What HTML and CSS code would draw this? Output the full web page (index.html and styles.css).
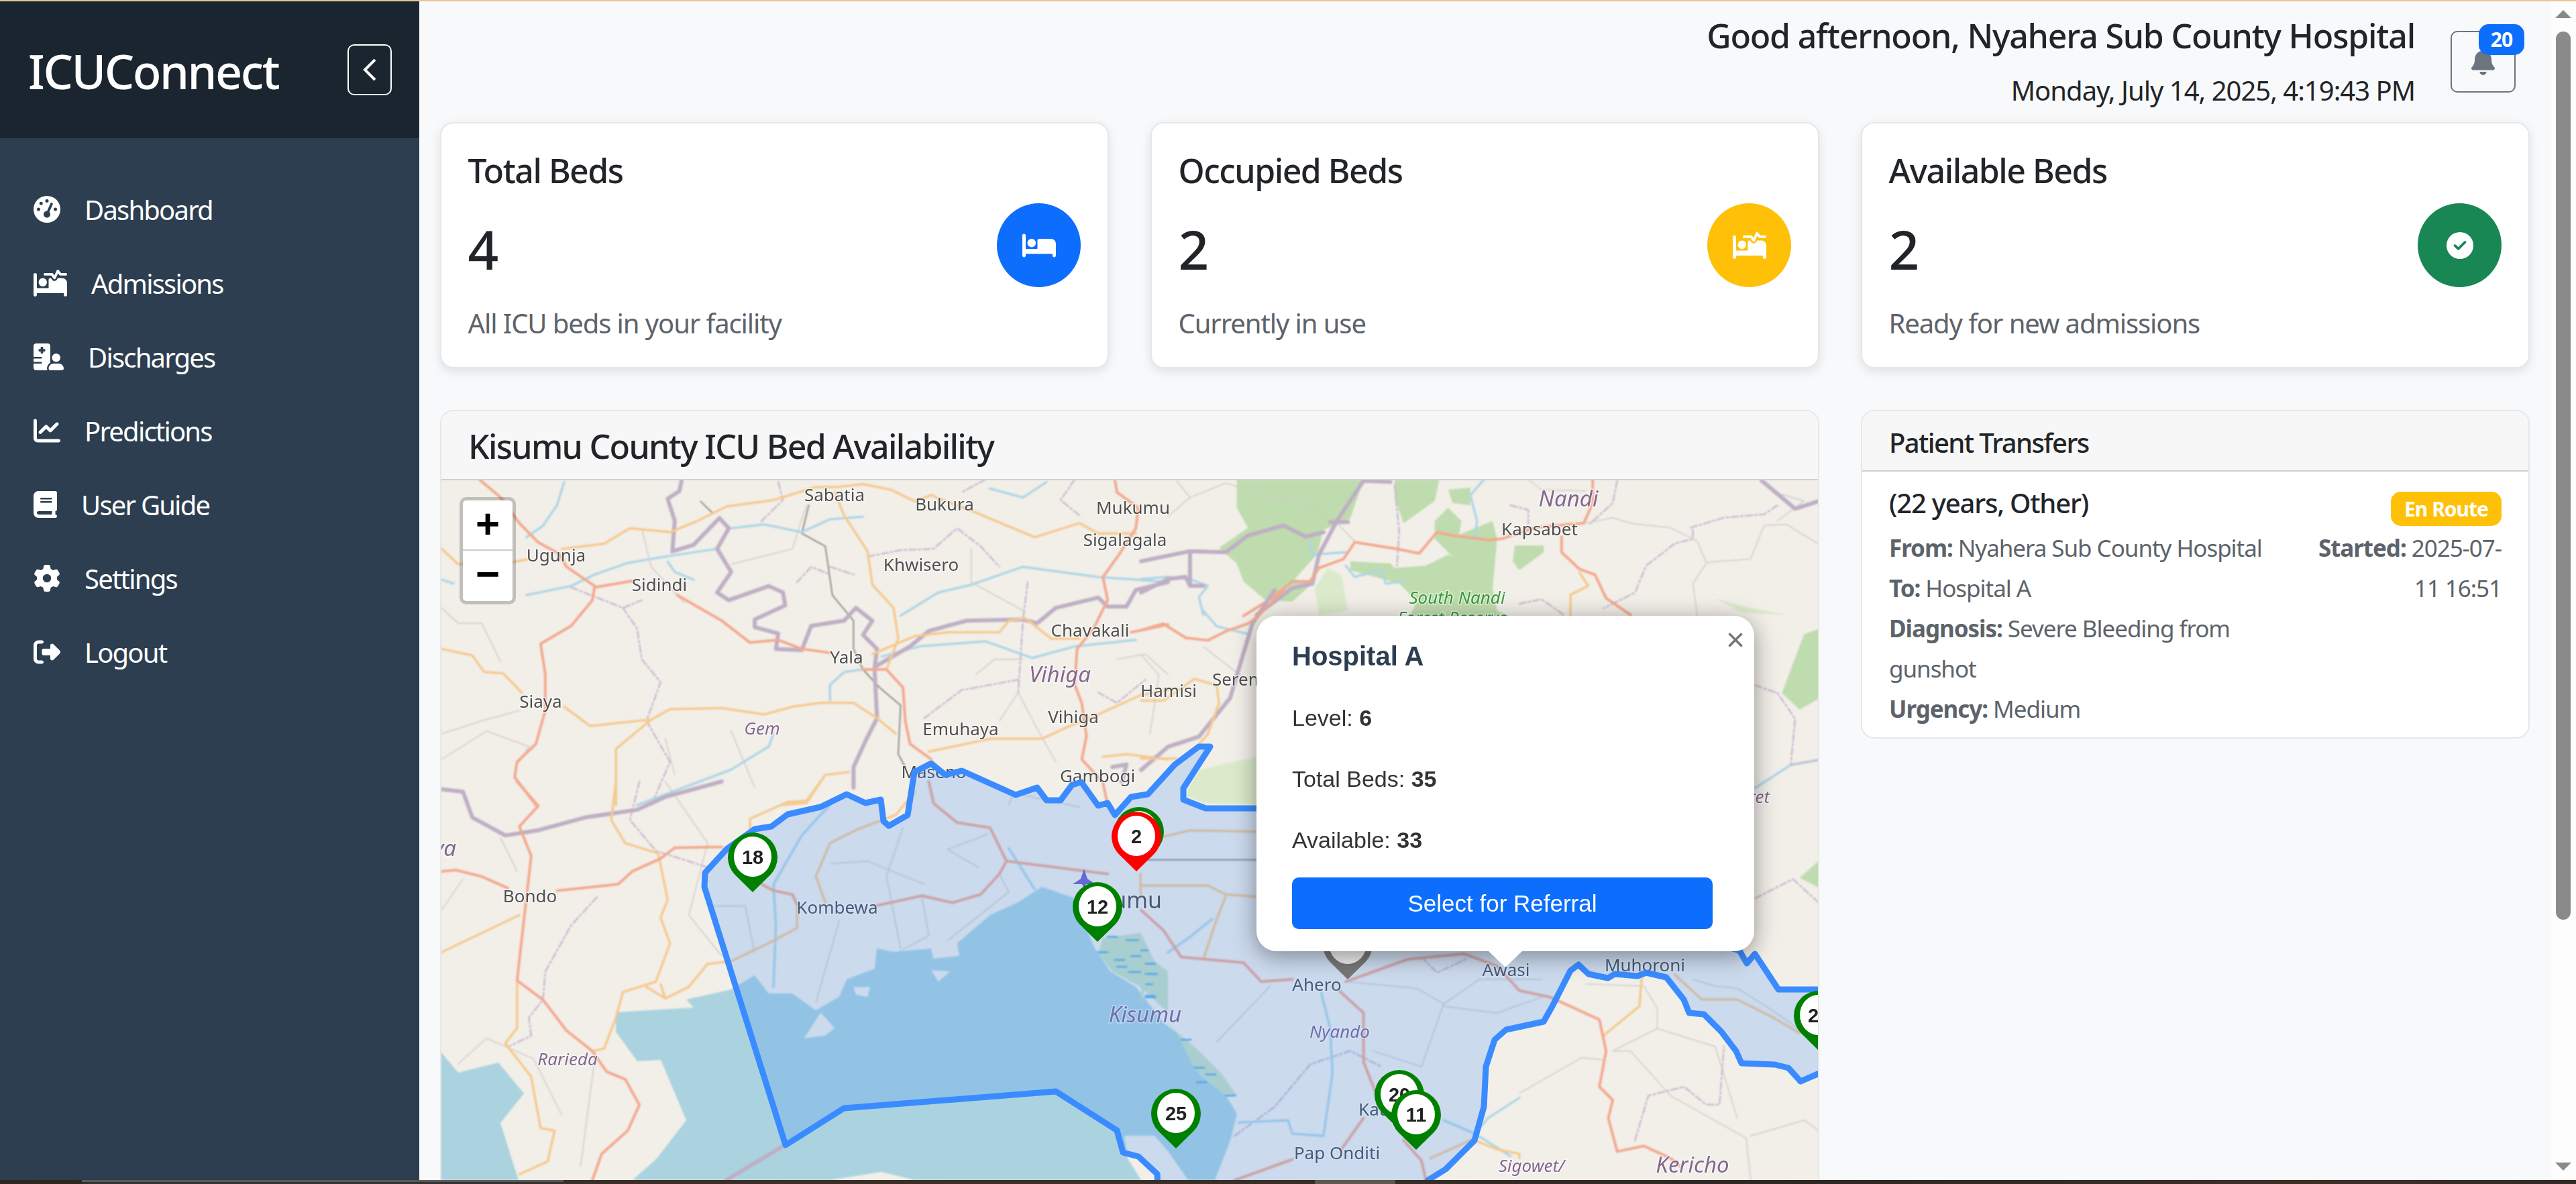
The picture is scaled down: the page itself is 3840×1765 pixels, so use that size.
FILE: index.html
```html
<!DOCTYPE html>
<html lang="en">
<head>
    <meta charset="UTF-8">
    <meta name="viewport" content="width=device-width, initial-scale=1.0">
    <title>ICUConnect</title>
    <link rel="stylesheet" href="styles.css">
</head>
<body>
    <div class="top-line"></div>
    <div class="window">
        <aside class="sidebar">
            <div class="sidebar-header">
                <h3 class="brand">ICUConnect</h3>
                <button class="collapse-btn" aria-label="Collapse">
                    <svg viewBox="0 0 20 34" class="chevron"><path d="M18 2 3 17l15 15"/></svg>
                </button>
            </div>
            <nav class="menu">
                <a class="menu-item">
                    <svg viewBox="0 0 512 512" class="ico"><path d="M0 256a256 256 0 1 1 512 0A256 256 0 1 1 0 256zM288 96a32 32 0 1 0 -64 0 32 32 0 1 0 64 0zM256 416c35.3 0 64-28.7 64-64c0-17.4-6.9-33.1-18.1-44.6L366 161.7c5.3-12.1-.2-26.3-12.3-31.6s-26.3 .2-31.6 12.3L257.9 288c-.6 0-1.3 0-1.9 0c-35.3 0-64 28.7-64 64s28.7 64 64 64zM176 144a32 32 0 1 0 -64 0 32 32 0 1 0 64 0zM96 288a32 32 0 1 0 0-64 32 32 0 1 0 0 64zm352-32a32 32 0 1 0 -64 0 32 32 0 1 0 64 0z"/></svg>
                    Dashboard
                </a>
                <a class="menu-item">
                    <svg viewBox="0 0 640 512" class="ico"><path d="M483.2 9.6L524 64h92c13.3 0 24 10.7 24 24s-10.7 24-24 24H512c-7.6 0-14.7-3.6-19.2-9.6L468.7 70.3l-47 99.9c-3.7 7.8-11.3 13.1-19.9 13.7s-16.9-3.4-21.7-10.6L339.2 112H216c-13.3 0-24-10.7-24-24s10.7-24 24-24H352c8 0 15.5 4 20 10.7l24.4 36.6 45.9-97.5C445.9 6.2 453.2 1 461.6 .1s16.6 2.7 21.6 9.5zM320 160h12.7l20.7 31.1c11.2 16.8 30.6 26.3 50.7 24.8s37.9-13.7 46.5-32L461.9 160H544c53 0 96 43 96 96V480c0 17.7-14.3 32-32 32s-32-14.3-32-32V448H352 320 64v32c0 17.7-14.3 32-32 32s-32-14.3-32-32V96C0 78.3 14.3 64 32 64s32 14.3 32 32V352H288V192c0-17.7 14.3-32 32-32zm-144 0a80 80 0 1 1 0 160 80 80 0 1 1 0-160z"/></svg>
                    Admissions
                </a>
                <a class="menu-item">
                    <svg viewBox="0 0 576 512" class="ico"><path d="M48 0C21.5 0 0 21.5 0 48V256H144c8.8 0 16 7.2 16 16s-7.2 16-16 16H0v64H144c8.8 0 16 7.2 16 16s-7.2 16-16 16H0v80c0 26.5 21.5 48 48 48H265.9c-6.3-10.2-9.9-22.2-9.9-35.1c0-46.9 25.8-87.8 64-109.2V271.8 48c0-26.5-21.5-48-48-48H48zM152 64h16c8.8 0 16 7.2 16 16v24h24c8.8 0 16 7.2 16 16v16c0 8.8-7.2 16-16 16H184v24c0 8.8-7.2 16-16 16H152c-8.8 0-16-7.2-16-16V152H112c-8.8 0-16-7.2-16-16V120c0-8.8 7.2-16 16-16h24V80c0-8.8 7.2-16 16-16zM512 272a80 80 0 1 0 -160 0 80 80 0 1 0 160 0zM288 477.1c0 19.3 15.6 34.9 34.9 34.9H541.1c19.3 0 34.9-15.6 34.9-34.9c0-51.4-41.7-93.1-93.1-93.1H381.1c-51.4 0-93.1 41.7-93.1 93.1z"/></svg>
                    Discharges
                </a>
                <a class="menu-item">
                    <svg viewBox="0 0 512 512" class="ico"><path d="M64 64c0-17.7-14.3-32-32-32S0 46.3 0 64V400c0 44.2 35.8 80 80 80H480c17.7 0 32-14.3 32-32s-14.3-32-32-32H80c-8.8 0-16-7.2-16-16V64zm406.6 86.6c12.5-12.5 12.5-32.8 0-45.3s-32.8-12.5-45.3 0L320 210.7l-57.4-57.4c-12.5-12.5-32.8-12.5-45.3 0l-112 112c-12.5 12.5-12.5 32.8 0 45.3s32.8 12.5 45.3 0L240 221.3l57.4 57.4c12.5 12.5 32.8 12.5 45.3 0l128-128z"/></svg>
                    Predictions
                </a>
                <a class="menu-item">
                    <svg viewBox="0 0 448 512" class="ico"><path d="M96 0C43 0 0 43 0 96V416c0 53 43 96 96 96H384h32c17.7 0 32-14.3 32-32s-14.3-32-32-32V384c17.7 0 32-14.3 32-32V32c0-17.7-14.3-32-32-32H384 96zm0 384H352v64H96c-17.7 0-32-14.3-32-32s14.3-32 32-32zm32-240c0-8.8 7.2-16 16-16H336c8.8 0 16 7.2 16 16s-7.2 16-16 16H144c-8.8 0-16-7.2-16-16zm16 48H336c8.8 0 16 7.2 16 16s-7.2 16-16 16H144c-8.8 0-16-7.2-16-16s7.2-16 16-16z"/></svg>
                    User Guide
                </a>
                <a class="menu-item">
                    <svg viewBox="0 0 512 512" class="ico"><path d="M495.9 166.6c3.2 8.7 .5 18.4-6.4 24.6l-43.3 39.4c1.1 8.3 1.7 16.8 1.7 25.4s-.6 17.1-1.7 25.4l43.3 39.4c6.9 6.2 9.6 15.9 6.4 24.6c-4.4 11.9-9.7 23.3-15.8 34.3l-4.7 8.1c-6.6 11-14 21.4-22.1 31.2c-5.9 7.2-15.7 9.6-24.5 6.8l-55.7-17.7c-13.4 10.3-28.2 18.9-44 25.4l-12.5 57.1c-2 9.1-9 16.3-18.2 17.8c-13.8 2.3-28 3.5-42.5 3.5s-28.7-1.2-42.5-3.5c-9.2-1.5-16.2-8.7-18.2-17.8l-12.5-57.1c-15.8-6.5-30.6-15.1-44-25.4L83.1 425.9c-8.8 2.8-18.6 .3-24.5-6.8c-8.1-9.8-15.5-20.2-22.1-31.2l-4.7-8.1c-6.1-11-11.4-22.4-15.8-34.3c-3.2-8.7-.5-18.4 6.4-24.6l43.3-39.4C64.6 273.1 64 264.6 64 256s.6-17.1 1.7-25.4L22.4 191.2c-6.9-6.2-9.6-15.9-6.4-24.6c4.4-11.9 9.7-23.3 15.8-34.3l4.7-8.1c6.6-11 14-21.4 22.1-31.2c5.9-7.2 15.7-9.6 24.5-6.8l55.7 17.7c13.4-10.3 28.2-18.9 44-25.4l12.5-57.1c2-9.1 9-16.3 18.2-17.8C227.3 1.2 241.5 0 256 0s28.7 1.2 42.5 3.5c9.2 1.5 16.2 8.7 18.2 17.8l12.5 57.1c15.8 6.5 30.6 15.1 44 25.4l55.7-17.7c8.8-2.8 18.6-.3 24.5 6.8c8.1 9.8 15.5 20.2 22.1 31.2l4.7 8.1c6.1 11 11.4 22.4 15.8 34.3zM256 336a80 80 0 1 0 0-160 80 80 0 1 0 0 160z"/></svg>
                    Settings
                </a>
                <a class="menu-item">
                    <svg viewBox="0 0 512 512" class="ico"><path d="M377.9 105.9L500.7 228.7c7.2 7.2 11.3 17.1 11.3 27.3s-4.1 20.1-11.3 27.3L377.9 406.1c-6.4 6.4-15 9.9-24 9.9c-18.7 0-33.9-15.2-33.9-33.9l0-62.1-128 0c-17.7 0-32-14.3-32-32l0-64c0-17.7 14.3-32 32-32l128 0 0-62.1c0-18.7 15.2-33.9 33.9-33.9c9 0 17.6 3.5 24 9.9zM160 96L96 96c-17.7 0-32 14.3-32 32l0 256c0 17.7 14.3 32 32 32l64 0c17.7 0 32 14.3 32 32s-14.3 32-32 32l-64 0c-53 0-96-43-96-96L0 128C0 75 43 32 96 32l64 0c17.7 0 32 14.3 32 32s-14.3 32-32 32z"/></svg>
                    Logout
                </a>
            </nav>
        </aside>

        <main class="content">
            <header class="topbar">
                <div class="greeting">
                    <h4 class="hello">Good afternoon, Nyahera Sub County Hospital</h4>
                    <p class="clock">Monday, July 14, 2025, 4:19:43 PM</p>
                </div>
                <button class="bell-btn" aria-label="Notifications">
                    <svg viewBox="0 0 448 512" class="bell"><path d="M224 0c-17.7 0-32 14.3-32 32V51.2C119 66 64 130.6 64 208v18.8c0 47-17.3 92.4-48.5 127.6l-7.4 8.3c-8.4 9.4-10.4 22.9-5.3 34.4S19.4 416 32 416H416c12.6 0 24-7.4 29.2-18.9s3.1-25-5.3-34.4l-7.4-8.3C401.3 319.2 384 273.9 384 226.8V208c0-77.4-55-142-128-156.8V32c0-17.7-14.3-32-32-32zm45.3 493.3c12-12 18.7-28.3 18.7-45.3H224 160c0 17 6.7 33.3 18.7 45.3s28.3 18.7 45.3 18.7s33.3-6.7 45.3-18.7z"/></svg>
                    <span class="bell-badge">20</span>
                </button>
            </header>

            <section class="grid">
                <div class="card stat">
                    <h5 class="stat-title">Total Beds</h5>
                    <div class="stat-row">
                        <span class="stat-num">4</span>
                        <span class="stat-icon blue">
                            <svg viewBox="0 0 640 512" class="stat-ico"><path d="M32 32c17.7 0 32 14.3 32 32V320H288V160c0-17.7 14.3-32 32-32H544c53 0 96 43 96 96V448c0 17.7-14.3 32-32 32s-32-14.3-32-32V416H352 320 64v32c0 17.7-14.3 32-32 32s-32-14.3-32-32V64C0 46.3 14.3 32 32 32zm144 96a80 80 0 1 1 0 160 80 80 0 1 1 0-160z"/></svg>
                        </span>
                    </div>
                    <p class="stat-note">All ICU beds in your facility</p>
                </div>
                <div class="card stat">
                    <h5 class="stat-title">Occupied Beds</h5>
                    <div class="stat-row">
                        <span class="stat-num">2</span>
                        <span class="stat-icon yellow">
                            <svg viewBox="0 0 640 512" class="stat-ico"><path d="M483.2 9.6L524 64h92c13.3 0 24 10.7 24 24s-10.7 24-24 24H512c-7.6 0-14.7-3.6-19.2-9.6L468.7 70.3l-47 99.9c-3.7 7.8-11.3 13.1-19.9 13.7s-16.9-3.4-21.7-10.6L339.2 112H216c-13.3 0-24-10.7-24-24s10.7-24 24-24H352c8 0 15.5 4 20 10.7l24.4 36.6 45.9-97.5C445.9 6.2 453.2 1 461.6 .1s16.6 2.7 21.6 9.5zM320 160h12.7l20.7 31.1c11.2 16.8 30.6 26.3 50.7 24.8s37.9-13.7 46.5-32L461.9 160H544c53 0 96 43 96 96V480c0 17.7-14.3 32-32 32s-32-14.3-32-32V448H352 320 64v32c0 17.7-14.3 32-32 32s-32-14.3-32-32V96C0 78.3 14.3 64 32 64s32 14.3 32 32V352H288V192c0-17.7 14.3-32 32-32zm-144 0a80 80 0 1 1 0 160 80 80 0 1 1 0-160z"/></svg>
                        </span>
                    </div>
                    <p class="stat-note">Currently in use</p>
                </div>
                <div class="card stat">
                    <h5 class="stat-title">Available Beds</h5>
                    <div class="stat-row">
                        <span class="stat-num">2</span>
                        <span class="stat-icon green">
                            <svg viewBox="0 0 512 512" class="stat-ico"><path d="M256 512A256 256 0 1 0 256 0a256 256 0 1 0 0 512zM369 209L241 337c-9.4 9.4-24.6 9.4-33.9 0l-64-64c-9.4-9.4-9.4-24.6 0-33.9s24.6-9.4 33.9 0l47 47L335 175c9.4-9.4 24.6-9.4 33.9 0s9.4 24.6 0 33.9z"/></svg>
                        </span>
                    </div>
                    <p class="stat-note">Ready for new admissions</p>
                </div>

                <div class="card map-card">
                    <div class="card-head map-head">Kisumu County ICU Bed Availability</div>
                    <div class="map">
                        <svg class="map-svg" viewBox="656 716 2056 1043">
                            <defs>
                                <path id="pin-shape" d="M0 52-26.2 26.2A37 37 0 1 1 26.2 26.2Z"/>
                            </defs>
                            <rect x="656" y="716" width="2056" height="1043" fill="#f2efe9"/>
                            <g class="tiles">
                                <!-- forest and wetland, traced from the tile picture -->
                                <g transform="translate(1700 710) scale(.6633 .3333)">
                                    <path class="forest" d="M215 15H500L470 190 410 240 395 350 345 460 385 480 340 560 280 555 230 470 215 390 175 320 240 230 215 140Z"/>
                                    <path class="forest" d="M570 15H670L660 110 590 210 570 100Z"/>
                                    <path class="forest" d="M690 60 740 50V130L700 120Z"/>
                                    <path class="forest" d="M660 200 690 140 720 200 715 260 790 200 800 280 790 500 800 600 840 640H600L620 560 580 480 470 420V380L560 390 570 410 640 400 690 350 700 360 660 280Z"/>
                                    <path class="forest" d="M840 310H905V340L850 420 835 380Z"/>
                                    <path class="meadow" d="M390 500 420 410 450 440 465 600 400 620Z"/>
                                    <path class="meadow" d="M1290 545 1350 580 1450 620 1350 610Z"/>
                                </g>
                                <g transform="translate(1700 880) scale(.6633 .3827)">
                                    <path class="forest" d="M1440 400 1490 170 1525 150V420L1480 465Z"/>
                                    <path class="forest" d="M1480 1120 1525 1050V1160Z"/>
                                    <path class="meadow" d="M110 760 130 700 200 670 260 650V835L140 830 100 800Z"/>
                                </g>
                                <!-- lake -->
                                <path class="lake" d="M656 1759V1568L682 1599 742 1584 780 1630 745 1674 763 1731 772 1759Z"/>
                                <path class="lake" d="M942 1759 977 1728 1022 1670 984 1580 949 1582 917 1538V1509L1033 1502 1022 1490 1089 1475 1124 1454 1145 1481H1180L1215 1506 1250 1486 1261 1460 1303 1444 1306 1414 1331 1419 1387 1414 1390 1429 1429 1425 1426 1406 1475 1364 1517 1345 1552 1322 1601 1339 1629 1410 1654 1448 1692 1471 1734 1525 1753 1540 1780 1567 1786 1600 1826 1633 1843 1660 1833 1700 1810 1759H1770L1740 1716 1720 1693H1675L1680 1727 1700 1759H1362L1313 1747 1237 1759Z"/>
                                <g transform="translate(640 1165) scale(.7015 .3827)">
                                    <path class="land" d="M795 1000 830 900 860 960 840 990Z"/>
                                    <path class="land" d="M1065 735 1105 740 1080 780Z"/>
                                    <path class="land" d="M900 800 935 800 930 840 905 830Z"/>
                                    <path class="wetland" d="M1430 610 1510 590 1540 700 1568 740V900L1510 800 1450 740 1420 670Z"/>
                                    <path class="dash" d="M1440 605h20M1480 618h25M1420 665h20M1455 695h20M1490 680h20M1520 710h20M1460 722h20M1485 742h25M1520 750h25M1515 790h20M1520 835h20"/>
                                </g>
                                <g transform="translate(1700 1300) scale(.6633 .3333)">
                                    <path class="wetland" d="M0 280 20 400 0 600ZM60 680 130 800 180 900 215 1000H190L120 880 80 720Z"/>
                                    <path class="dash" d="M0 350h15M10 410h22M10 455h22M10 560h22M90 750h22M120 875h22M145 905h22M125 940h22M190 1000h22"/>
                                </g>

                                <!-- left third of the map -->
                                <g transform="translate(640 600) scale(.7015 .3827)">
                                    <path class="minor" d="M450 490 470 640 540 780M640 630 770 570 800 400M1150 570V700L1260 810M1160 1060 1200 1000H1260M1460 1000 1520 980 1568 1060M25 800 60 860H110L150 1010M25 1290 110 1240 190 1200M25 1390 120 1280 210 1340 190 1400M500 1310 520 1450M640 1280 690 1500M1210 1240 1250 1130 1290 1270 1330 1400"/>
                                    <path class="rail" d="M575 385 600 430M805 400 790 510 840 560 855 750 900 850V960L920 1040 955 1110 1000 1180 995 1370 1010 1420"/>
                                    <path class="ward" d="M740 310 750 380 700 470M930 600 1000 575 1070 570 1120 490 1170 560 1210 640M850 640 900 670M780 700 810 640 850 670M300 720 410 800 450 770M410 800 440 880 450 1000 490 1090 460 1240 510 1400 470 1568M1050 1230 1130 1120 1250 1080M1270 700 1260 850 1250 1130M1370 300 1340 380 1380 440M1420 1130 1460 1170 1520 1080M1180 300 1130 350"/>
                                    <path class="river" d="M205 525 240 480 270 400 285 310M25 690 50 705M205 750 300 715 350 670 420 625 500 600 610 570M640 490 710 475 790 505 850 455 920 445M505 620 520 660 560 690M850 1160V1100L880 1050 920 1040M1000 830 1080 740 1150 710 1260 640 1420 680 1500 690 1568 700M960 990 1040 950 1180 930 1280 995 1370 950 1500 925M440 1568 640 1430 720 1340 730 1290M1190 335 1260 370 1310 310"/>
                                    <path class="county" d="M535 300 530 345 505 375 520 460 515 580 560 555 615 450 635 490 610 570 640 660 610 740 635 770 720 715 750 740 755 790 690 845V875L740 900 735 960 790 965 810 870 880 850 905 800 940 850 920 905 950 960 945 1030 1020 950 1060 890 1140 850 1260 845 1290 860 1330 800 1420 760 1440 795H1480L1500 730 1568 700M945 1050 950 1230 925 1320 900 1420V1500M1450 1420 1480 1410 1470 1480"/>
                                    <path class="road-b" d="M25 570 60 630 180 620 210 610M280 570 370 550 425 490 510 505 570 460 630 405 730 380 820 330H860L920 318 980 340 1030 385 1065 360 1090 380 1155 425 1285 525 1380 470 1420 510H1500M860 350 880 440 930 580 940 710 985 800 995 920 970 1040M940 980 1030 910 1100 895H1210L1230 850 1265 840 1320 920H1380M25 960 90 985 115 1050 155 1055 195 1130M285 1185 340 1260 470 1235 510 1195 620 1190 710 1215 770 1185 830 1170H900L950 1230 990 1290M1060 1360 1190 1310H1300L1360 1260 1420 1215 1510 1140 1568 1120M470 1235 395 1350V1568M750 1568 800 1560 840 1450 890 1440M1430 1380 1480 1370 1568 1390"/>
                                    <path class="road-a" d="M105 300 150 370 190 470 230 545 275 590 290 640 350 715 345 770 300 870 235 940 245 1060V1200L225 1330 185 1400 180 1460 225 1568M350 720 430 695M525 750 620 850 680 935 740 925 790 960 850 975M920 1040H970L1005 1110 1010 1240 1020 1330 1065 1390M1455 300 1460 350 1505 410 1500 490 1465 590 1430 680 1440 770 1410 880 1375 960 1370 1100 1385 1170 1395 1300 1385 1390 1430 1480 1440 1568M1490 895 1530 880 1568 865"/>
                                </g>
                                <!-- lower left -->
                                <g transform="translate(640 1165) scale(.7015 .3827)">
                                    <path class="minor" d="M500 0 590 240 550 520 620 680M150 220 185 350M25 500 70 380M605 485H670L690 670M870 540 820 860M1005 180 970 370 1000 650M1185 205 1100 265 1165 335M1045 445 1060 600 1000 660M1230 90 1240 45 1380 100M1210 360 1230 430 1100 620M850 320 930 310 1050 400M280 1300 220 1080 120 1000 60 1100M350 1080 320 1500"/>
                                    <path class="ward" d="M445 0 425 150 480 270 600 340M355 450 300 560 245 740 240 850 210 920 215 990 170 1030"/>
                                    <path class="river" d="M730 800 735 560 730 400 790 210 850 90M1230 260 1285 420"/>
                                    <path class="county" d="M25 30 70 40 90 140 160 210 230 190 330 140 440 110 500 60 620 0M630 1552 755 1415"/>
                                    <path class="road-b" d="M395 0 385 150 415 240 485 280 505 460 490 530 510 630 480 780 410 820 395 920 370 1040 345 1050M25 665 190 520M680 185V145L760 80 800 75 830 0M490 790 500 845 550 800 590 710 640 700 730 620 780 570V490M460 800 500 845M160 1020 215 1150 235 1350 265 1360 250 1480 190 1530M185 780V960L160 1020M1030 40 990 130 910 185 850 240 820 370 840 470M1510 360V450"/>
                                    <path class="road-a" d="M185 0 230 95 190 175 215 290 185 775 240 850 290 970 345 1050 375 1130 415 1160 445 1260 420 1360 365 1450 345 1552M25 350 55 345 110 370 165 415M270 425 400 400 430 350 490 300 520 258 620 255M705 400 730 425 770 440 780 480M945 485 1045 445 1110 472 1170 440 1210 360 1225 310 1190 180 1120 160 1070 85 1060 0M1225 310 1440 360"/>
                                </g>
                                <!-- top right -->
                                <g transform="translate(1700 710) scale(.6633 .3333)">
                                    <path class="minor" d="M80 20 110 95 190 30 240 60 270 90 350 110 430 190 480 290M110 95 60 180M1000 210 1060 185 1100 210 1190 230 1250 290 1270 385 1370 370 1400 220 1450 215 1520 300M1270 390 1240 480 1250 620M870 15 900 60 1000 65M1420 70 1490 110 1430 200"/>
                                    <path class="ward" d="M570 40 580 250 575 400M830 130 870 150V210M1070 20 1060 120 1010 210M1235 230 1310 185 1400 170 1430 130M1240 240V280L1200 300 1135 400 1110 520 1040 590M850 570 900 550 950 620"/>
                                    <path class="river" d="M770 15 740 85 755 200 750 270M380 290 385 350 460 340M460 400 480 450 540 420 550 480 590 470M0 460 60 450 110 460 150 490 130 540 140 620"/>
                                    <path class="county" d="M500 20 440 200 400 350 385 480 340 500 260 620M500 20 560 25M425 205H465M0 520 60 460 100 450 110 490H140M0 380 110 335 190 340 240 265 320 220 370 270 410 250M1395 20 1470 145 1525 110M110 335V490"/>
                                    <path class="road-b" d="M985 430 1005 490 965 530V620"/>
                                    <path class="road-a" d="M1015 15V120L995 210 960 215 885 230 810 280 780 285 700 265 665 250 625 345 575 325 480 295 455 370 400 410 380 470H340L290 550 230 625M945 270V340L985 415 1020 440 1045 545 1100 620"/>
                                </g>
                                <!-- left of and right of the popup -->
                                <g transform="translate(1700 880) scale(.6633 .3827)">
                                    <path class="minor" d="M0 250 40 330 20 560M140 220 230 340"/>
                                    <path class="river" d="M140 80 170 140 240 170M1380 770 1460 680 1525 660"/>
                                    <path class="ward" d="M1380 370 1430 400 1470 500 1460 680 1525 660M1380 1200 1465 1125 1525 1220"/>
                                    <path class="county" d="M0 700 60 610 130 570 200 420 250 130 300 0"/>
                                    <path class="road-b" d="M0 430H50L120 345 170 370 175 440 150 560 130 600M0 655H80M260 940 110 935 50 960"/>
                                    <path class="road-a" d="M0 155 50 130 100 185 150 195 190 160 240 130 260 105 320 0"/>
                                    <path class="rail" d="M0 1050H260"/>
                                </g>
                                <!-- bottom right -->
                                <g transform="translate(1700 1300) scale(.6633 .3333)">
                                    <path class="minor" d="M460 490 620 520 680 590 760 480H900M680 600 800 630 900 560M680 590 630 870 520 800M290 510 170 760M1000 500 1130 510 1160 610V700L1060 800H1100L1190 1000 1360 1190 1370 1378M850 990 990 830 1040 840M1370 1180 1490 1110 1525 1160M1160 700 1290 780 1340 1100M1240 480 1290 510 1340 520 1420 620 1490 720"/>
                                    <path class="ward" d="M210 1180 300 1050 380 860 470 800 540 870M1110 1200 1140 1000 1220 960 1270 1040H1300L1310 780M630 380 665 450 730 390"/>
                                    <path class="river" d="M405 540 425 700 430 900 410 1180 340 1170 330 1110 220 1120M60 360 110 290 160 210M850 1010 780 1100 750 1170 830 1270M680 1110 750 1170"/>
                                    <path class="road-b" d="M1125 475 1120 600 1040 730M190 110 170 210 140 390M0 60H150L190 100 260 110M750 1200 800 1240 850 1260V1280M650 1280 745 1195M1200 460 1260 570H1340L1420 650 1480 720"/>
                                    <path class="road-a" d="M0 170 50 260 90 380 230 405 270 490 340 480M460 490 600 390 725 365 800 420 850 530 920 560 1030 660 1045 800 1030 960 1060 1020 1050 1100 1070 1250 1130 1225 1190 1280 1215 1320M445 530 500 630V850L530 1000M500 1100 450 1240M210 1378 340 1285M640 1378 630 1290 590 1200"/>
                                </g>
                            </g>

                            <g class="labels">
                                <text x="1243" y="747">Sabatia</text>
                                <text x="1407" y="761">Bukura</text>
                                <text x="1688" y="766">Mukumu</text>
                                <text x="1676" y="814">Sigalagala</text>
                                <text x="828" y="837">Ugunja</text>
                                <text x="1372" y="851">Khwisero</text>
                                <text x="982" y="881">Sidindi</text>
                                <text x="1624" y="949">Chavakali</text>
                                <text x="1261" y="989">Yala</text>
                                <text x="805" y="1055">Siaya</text>
                                <text x="1741" y="1039">Hamisi</text>
                                <text x="1845" y="1022">Serem</text>
                                <text x="1599" y="1078">Vihiga</text>
                                <text x="1431" y="1096">Emuhaya</text>
                                <text x="1635" y="1166">Gambogi</text>
                                <text x="789" y="1345">Bondo</text>
                                <text x="1247" y="1362">Kombewa</text>
                                <text class="city" x="1671" y="1354">Kisumu</text>
                                <text x="1391" y="1160">Maseno</text>
                                <text x="1962" y="1477">Ahero</text>
                                <text x="2244" y="1455">Awasi</text>
                                <text x="2451" y="1448">Muhoroni</text>
                                <text x="2060" y="1663">Katito</text>
                                <text x="1992" y="1728">Pap Onditi</text>
                                <text x="2294" y="798">Kapsabet</text>
                                <text class="area" x="1579" y="1017">Vihiga</text>
                                <text class="area small" x="1135" y="1095">Gem</text>
                                <text class="area" x="640" y="1276">Siaya</text>
                                <text class="area small" x="845" y="1588">Rarieda</text>
                                <text class="area" x="1706" y="1524">Kisumu</text>
                                <text class="area small" x="1996" y="1547">Nyando</text>
                                <text class="area small" x="2282" y="1747">Sigowet/</text>
                                <text class="area" x="2522" y="1748">Kericho</text>
                                <text class="area" x="2337" y="755">Nandi</text>
                                <text class="area small" x="2590" y="1197">Tinderet</text>
                                <text class="reserve" x="2171" y="900">South Nandi</text>
                                <text class="reserve" x="2164" y="930">Forest Reserve</text>
                            </g>
                            <path class="airport" d="M1615 1295 1620 1310 1632 1318H1618L1615 1325 1612 1318H1598L1610 1310Z"/>

                            <path class="county-shape" d="M1170 1707 1257 1652 1573 1627 1664 1685 1673 1718 1696 1724 1724 1750 1726 1800H2100L2128 1759 2154 1743 2197 1700 2211 1650 2214 1590 2227 1550 2244 1535 2300 1523 2313 1500 2340 1447 2352 1438 2367 1452 2396 1458 2406 1452 2440 1455 2453 1450 2483 1457 2509 1490 2517 1510 2539 1512 2565 1538 2587 1567 2595 1585 2645 1587 2665 1592 2683 1612 2711 1600 2760 1580V1475H2650L2615 1422 2603 1436 2592 1417 1872 1205H1796L1763 1192V1175L1803 1113H1786L1750 1140 1710 1184 1685 1188 1661 1215 1650 1197 1636 1201 1611 1166 1597 1170 1580 1193H1559L1545 1174 1513 1185 1433 1149 1408 1155 1387 1138 1362 1151 1352 1215 1324 1231 1316 1224 1312 1192 1289 1197 1261 1184 1222 1203 1173 1214 1149 1232 1124 1236 1082 1266 1050 1301 1049 1322Z"/>

                            <g class="pins">
                                <g class="pin" transform="translate(1121 1278)"><use href="#pin-shape"/><ellipse class="pin-in" cy="-1" rx="28" ry="30"/><text y="10">18</text></g>
                                <g class="pin" transform="translate(1697 1240)"><use href="#pin-shape"/><ellipse class="pin-in" cy="-1" rx="28" ry="30"/><text y="10">9</text></g>
                                <g class="pin red" transform="translate(1693 1247)"><use href="#pin-shape"/><ellipse class="pin-in" cy="-1" rx="28" ry="30"/><text y="10">2</text></g>
                                <g class="pin" transform="translate(1635 1352)"><use href="#pin-shape"/><ellipse class="pin-in" cy="-1" rx="28" ry="30"/><text y="10">12</text></g>
                                <g class="pin grey" transform="translate(2008 1408)"><use href="#pin-shape"/><ellipse class="pin-in" cy="-1" rx="28" ry="30"/><text y="10">0</text></g>
                                <g class="pin" transform="translate(1752 1660)"><use href="#pin-shape"/><ellipse class="pin-in" cy="-1" rx="28" ry="30"/><text y="10">25</text></g>
                                <g class="pin" transform="translate(2085 1632)"><use href="#pin-shape"/><ellipse class="pin-in" cy="-1" rx="28" ry="30"/><text y="10">20</text></g>
                                <g class="pin" transform="translate(2110 1662)"><use href="#pin-shape"/><ellipse class="pin-in" cy="-1" rx="28" ry="30"/><text y="10">11</text></g>
                                <g class="pin" transform="translate(2710 1514)"><use href="#pin-shape"/><ellipse class="pin-in" cy="-1" rx="28" ry="30"/><text y="10">24</text></g>
                            </g>
                        </svg>

                        <div class="zoom-ctl">
                            <span class="zoom-btn">+</span>
                            <span class="zoom-btn">&#x2212;</span>
                        </div>

                        <div class="popup">
                            <span class="popup-close">&times;</span>
                            <h3 class="popup-title">Hospital A</h3>
                            <p class="popup-line">Level: <b>6</b></p>
                            <p class="popup-line">Total Beds: <b>35</b></p>
                            <p class="popup-line">Available: <b>33</b></p>
                            <button class="popup-btn">Select for Referral</button>
                            <span class="popup-tip"></span>
                        </div>
                    </div>
                </div>

                <div class="card transfers">
                    <div class="card-head">Patient Transfers</div>
                    <div class="transfer-body">
                        <div class="transfer-top">
                            <span class="patient">(22 years, Other)</span>
                            <span class="status">En Route</span>
                        </div>
                        <div class="transfer-info">
                            <div class="info-left">
                                <div><b>From:</b> Nyahera Sub County Hospital</div>
                                <div><b>To:</b> Hospital A</div>
                                <div><b>Diagnosis:</b> Severe Bleeding from gunshot</div>
                                <div><b>Urgency:</b> Medium</div>
                            </div>
                            <div class="info-right"><b>Started:</b> 2025-07-11 16:51</div>
                        </div>
                    </div>
                </div>
            </section>
        </main>

        <div class="scrollbar">
            <span class="arrow-up"></span>
            <span class="thumb"></span>
            <span class="arrow-down"></span>
        </div>
    </div>
    <div class="taskbar">
        <span class="task task-active"></span>
        <span class="task task-open"></span>
    </div>
</body>
</html>
```

FILE: styles.css
```css
* {
    box-sizing: border-box;
}
html, body {
    height: 100%;
}
body {
    margin: 0;
    overflow: hidden;
    font-family: "Noto Sans", "Open Sans", sans-serif;
    font-size: 40px;
    color: #212529;
    background: #f8f9fa;
    display: flex;
    flex-direction: column;
}
h3, h4, h5, p {
    margin: 0;
}
button {
    font: inherit;
    padding: 0;
}

.top-line {
    height: 2px;
    background: #eac494;
}
.window {
    height: 1757px;
    display: flex;
    overflow: hidden;
}

/* sidebar */
.sidebar {
    width: 625px;
    flex: none;
    background: #2c3e50;
    color: #fff;
}
.sidebar-header {
    height: 204px;
    background: #1a252f;
    display: flex;
    align-items: center;
    justify-content: space-between;
    padding: 0 41px 0 42px;
}
.brand {
    font-size: 70px;
    font-weight: 500;
    letter-spacing: -2.4px;
    margin-top: 3px;
}
.collapse-btn {
    width: 66px;
    height: 76px;
    background: none;
    border: 2.5px solid #fff;
    border-radius: 10px;
    display: flex;
    align-items: center;
    justify-content: center;
}
.chevron {
    width: 20px;
    height: 34px;
    fill: none;
    stroke: #fff;
    stroke-width: 4;
}
.menu {
    padding: 51px 0 0 50px;
}
.menu-item {
    height: 110px;
    display: flex;
    align-items: center;
    gap: 36px;
    letter-spacing: -1.8px;
}
.ico {
    height: 40px;
    fill: #fff;
    flex: none;
}

/* main column */
.content {
    flex: 1;
    padding: 0 31px;
    overflow: hidden;
}
.topbar {
    height: 180px;
    display: flex;
    justify-content: flex-end;
    gap: 53px;
    padding-right: 21px;
}
.greeting {
    text-align: right;
    padding-top: 21px;
}
.hello {
    font-size: 50px;
    font-weight: 500;
    line-height: 60px;
    letter-spacing: -1.2px;
}
.clock {
    line-height: 60px;
    margin-top: 22px;
    letter-spacing: -1px;
}
.bell-btn {
    position: relative;
    width: 97px;
    height: 92px;
    margin-top: 44px;
    background: none;
    border: 2.5px solid #6c757d;
    border-radius: 10px;
}
.bell {
    height: 40px;
    fill: #6c757d;
    display: block;
    margin: 0 auto;
}
.bell-badge {
    position: absolute;
    top: -12px;
    left: 40px;
    width: 68px;
    height: 46px;
    border-radius: 15px;
    background: #0d6efd;
    color: #fff;
    font-size: 30px;
    font-weight: 700;
    line-height: 46px;
    text-align: center;
    letter-spacing: -1px;
}

.grid {
    display: grid;
    grid-template-columns: repeat(3, 997px);
    gap: 62px;
    align-items: start;
}
.card {
    background: #fff;
    border: 2.5px solid #e6e7e9;
    border-radius: 20px;
}
.stat {
    height: 367px;
    padding: 40px 40px 40px 39.5px;
    box-shadow: 0 5px 15px rgba(0,0,0,.1);
}
.stat-title {
    font-size: 50px;
    font-weight: 500;
    line-height: 60px;
    letter-spacing: -1.5px;
}
.stat-row {
    display: flex;
    align-items: center;
    justify-content: space-between;
    margin-top: 19px;
}
.stat-num {
    font-size: 80px;
    font-weight: 500;
    line-height: 96px;
    padding-top: 10px;
}
.stat-icon {
    width: 125px;
    height: 125px;
    border-radius: 50%;
    display: flex;
    align-items: center;
    justify-content: center;
}
.blue { background: #0d6efd; }
.yellow { background: #ffc107; }
.green { background: #198754; }
.stat-ico {
    height: 40px;
    fill: #fff;
}
.stat-note {
    margin-top: 24px;
    line-height: 60px;
    color: #5c636a;
    letter-spacing: -1.1px;
}

.card-head {
    background: #f7f7f7;
    border-bottom: 2.5px solid #cfcfcf;
    border-radius: 18px 18px 0 0;
    height: 90px;
    padding: 0 40px;
    font-weight: 500;
    line-height: 94px;
    letter-spacing: -1.6px;
}
.map-card {
    grid-column: span 2;
    height: 1200px;
}
.map-head {
    height: 103px;
    font-size: 50px;
    line-height: 104px;
    letter-spacing: -1.7px;
}

/* map */
.map {
    position: relative;
    overflow: hidden;
    height: 1094px;
}
.map-svg {
    display: block;
    width: 2056px;
    height: 1043px;
    margin-left: -1px;
}
.tiles {
    filter: blur(1.3px);
    fill: none;
    stroke-linejoin: round;
    stroke-linecap: round;
}
.tiles path {
    vector-effect: non-scaling-stroke;
}
.forest { fill: #bfdcae; }
.meadow { fill: #dbeaca; }
.lake { fill: #aad3df; }
.land { fill: #f2efe9; }
.wetland { fill: #c6e0c4; }
.dash { stroke: #5cb0e8; stroke-width: 2.5; }
.minor { stroke: #cfccc7; stroke-width: 1.5; }
.rail { stroke: #8f8d8a; stroke-width: 2; }
.ward { stroke: #cbb9d0; stroke-width: 2.5; stroke-dasharray: 10 4 3 4; }
.river { stroke: #aed6e6; stroke-width: 3.5; }
.county { stroke: #bfafc4; stroke-width: 6; }
.road-b { stroke: #f6c98e; stroke-width: 3.5; }
.road-a { stroke: #f3a98e; stroke-width: 4; }
.labels text {
    font-family: "Noto Sans", sans-serif;
    font-size: 26px;
    text-anchor: middle;
    fill: #4f4f4f;
    stroke: rgba(255,255,255,.6);
    stroke-width: 3px;
    paint-order: stroke;
}
.labels .city {
    font-size: 34px;
}
.labels .area {
    font-size: 33px;
    font-style: italic;
    fill: #84688f;
}
.labels .area.small {
    font-size: 26px;
}
.labels .reserve {
    font-style: italic;
    fill: #3a9a3a;
}
.airport { fill: #6f63c9; }
.county-shape {
    fill: rgba(51,136,255,.2);
    stroke: #3a8bff;
    stroke-width: 9px;
    stroke-linejoin: round;
}
.pin use { fill: #008000; }
.pin.red use { fill: #f00; }
.pin.grey use { fill: #777; }
.pin-in { fill: #fff; }
.pin.grey .pin-in { fill: #eee; }
.pin text {
    font-family: "Liberation Sans", sans-serif;
    font-size: 29px;
    font-weight: 700;
    text-anchor: middle;
    fill: #222;
}

.zoom-ctl {
    position: absolute;
    left: 27px;
    top: 25px;
    width: 84px;
    border: 5px solid rgba(0,0,0,.2);
    border-radius: 10px;
    background-clip: padding-box;
    display: flex;
    flex-direction: column;
}
.zoom-btn {
    height: 75px;
    background: #fff;
    font-family: "Liberation Mono", monospace;
    font-size: 62px;
    font-weight: 700;
    line-height: 80px;
    text-align: center;
    color: #000;
}
.zoom-btn:first-child {
    border-bottom: 2px solid #ccc;
    border-radius: 6px 6px 0 0;
}
.zoom-btn:last-child {
    border-radius: 0 0 6px 6px;
}

.popup {
    position: absolute;
    left: 1215px;
    top: 202px;
    width: 742px;
    height: 500px;
    background: #fff;
    border-radius: 30px;
    box-shadow: 0 7px 35px rgba(0,0,0,.4);
    padding: 37px 62px 0 53px;
    font-family: "Liberation Sans", sans-serif;
    font-size: 34px;
    color: #333;
}
.popup-close {
    position: absolute;
    top: 8px;
    right: 14px;
    font-size: 48px;
    color: #757575;
}
.popup-title {
    font-size: 40px;
    font-weight: 700;
    line-height: 46px;
    color: #2c3e50;
}
.popup-line {
    line-height: 40px;
    margin-top: 51px;
}
.popup-title + .popup-line {
    margin-top: 49px;
}
.popup-btn {
    display: block;
    width: 100%;
    height: 77px;
    margin-top: 36px;
    background: #0d6efd;
    border: 0;
    border-radius: 10px;
    color: #fff;
    font-size: 35px;
}
.popup-tip {
    position: absolute;
    left: 345px;
    bottom: -24px;
    width: 52px;
    height: 25px;
    background: #fff;
    clip-path: polygon(0 0, 100% 0, 50% 100%);
}

/* transfers */
.transfers {
    height: 490px;
    overflow: hidden;
}
.transfer-body {
    padding: 17px 40px 0;
}
.transfer-top {
    display: flex;
    justify-content: space-between;
    align-items: flex-start;
}
.patient {
    font-weight: 500;
    line-height: 60px;
    letter-spacing: -1.2px;
}
.status {
    background: #ffc107;
    color: #fff;
    font-size: 30px;
    font-weight: 700;
    line-height: 51px;
    padding: 0 20px;
    border-radius: 15px;
    letter-spacing: -1px;
    margin-top: 13px;
}
.transfer-info {
    display: flex;
    justify-content: space-between;
    margin-top: 3px;
    font-size: 35px;
    line-height: 60px;
    color: #5c636a;
    letter-spacing: -1.05px;
}
.info-left {
    width: 600px;
}
.info-right {
    width: 282px;
    text-align: right;
}

/* browser scrollbar and the edge of the task bar */
.scrollbar {
    width: 38px;
    flex: none;
    background: #fdfdfd;
    display: flex;
    flex-direction: column;
    align-items: center;
    padding-top: 13px;
}
.arrow-up {
    width: 0;
    height: 0;
    border: 12px solid transparent;
    border-top: 0;
    border-bottom: 12px solid #8a8a8a;
}
.thumb {
    width: 22px;
    height: 1324px;
    margin-top: 20px;
    border-radius: 11px;
    background: #8a8a8a;
}
.arrow-down {
    width: 0;
    height: 0;
    margin-top: 362px;
    border: 12px solid transparent;
    border-bottom: 0;
    border-top: 12px solid #8a8a8a;
}
.taskbar {
    height: 6px;
    position: relative;
    background: linear-gradient(90deg, #2e2620, #3c2f29 20%, #3a2e28 50%, #2e2824 70%, #3d3029 90%, #332b28);
    display: flex;
}
.task-active {
    margin-left: 122px;
    width: 718px;
    background: linear-gradient(#5b5a58 50%, #333 50%);
}
.task-open {
    margin-left: 1120px;
    width: 120px;
    background: #5f5850;
}
```
